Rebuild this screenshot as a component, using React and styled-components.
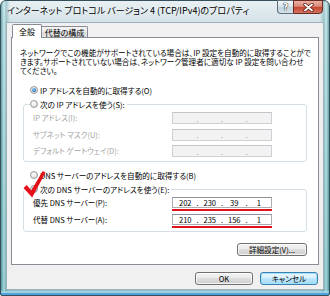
import React from 'react'
import styled, { createGlobalStyle, css } from 'styled-components'

const GlobalStyle = createGlobalStyle`
  html, body {
    margin: 0;
    padding: 0;
    background: #ffffff;
  }
  body {
    width: 330px;
    height: 296px;
    overflow: hidden;
    font-family: "Noto Sans CJK JP", "Noto Sans", sans-serif;
  }
`

const font = `"Noto Sans CJK JP", "Noto Sans", sans-serif`

const Window = styled.div`
  width: 330px;
  height: 296px;
  box-sizing: border-box;
  border: 1px solid #34505c;
  border-radius: 6px 6px 2px 2px;
  display: flex;
  flex-direction: column;
  font-family: ${font};
  font-feature-settings: "palt";
  background:
    linear-gradient(to right, rgba(40,120,125,.6), rgba(190,240,240,.55) 3px, rgba(80,150,160,.45) 5px, rgba(255,255,255,0) 9px,
      rgba(255,255,255,0) calc(100% - 9px), rgba(80,150,160,.45) calc(100% - 5px), rgba(190,240,240,.55) calc(100% - 3px), rgba(40,120,125,.6)),
    linear-gradient(to bottom, #e9f0f3, #d3e2e8 21px, #a7cbd2 60%, #8dbcc4);
  box-shadow: inset 0 -2px 0 rgba(60,150,215,.8), inset 0 -4px 0 rgba(170,220,240,.7);
`

const TitleBar = styled.div`
  height: 21px;
  flex: none;
  display: flex;
  justify-content: space-between;
  align-items: flex-start;
`

const Title = styled.div`
  padding: 3px 0 0 6px;
  font-size: 9px;
  line-height: 13px;
  color: #000;
  white-space: nowrap;
  text-shadow: 0 0 4px rgba(255,255,255,.9);
`

const CaptionButtons = styled.div`
  display: flex;
  margin: -1px 6px 0 0;
`

const CaptionButton = styled.div`
  height: 14px;
  box-sizing: border-box;
  display: flex;
  align-items: center;
  justify-content: center;
  ${p => p.$close ? css`
    width: 30px;
    border: 1px solid #6b2a22;
    border-radius: 0 0 4px 0;
    background: linear-gradient(to bottom, #eab0a4, #d98a78 45%, #c4452f 50%, #d2735f);
  ` : css`
    width: 16px;
    border: 1px solid #5d6f7b;
    border-right: none;
    border-radius: 0 0 0 4px;
    background: linear-gradient(to bottom, #f3f7f9, #dbe6ec 45%, #c3d4dd 50%, #d3e1e8);
  `}
`

const HelpGlyph = styled.span`
  font-family: "DejaVu Sans", sans-serif;
  font-weight: bold;
  font-size: 9px;
  line-height: 9px;
  color: #fff;
  text-shadow: 0 0 1px #2c3e4a, 0 0 1px #2c3e4a, 0 0 1px #2c3e4a;
`

const Client = styled.div`
  flex: 1;
  margin: 0 5px 5px;
  border: 1px solid #9fb2ba;
  background: #f0f0f0;
  padding: 1px 4px 0;
  display: flex;
  flex-direction: column;
`

const Tabs = styled.div`
  display: flex;
  align-items: flex-end;
  margin: 0 0 -1px 1px;
  position: relative;
  z-index: 1;
`

const Tab = styled.div`
  box-sizing: border-box;
  font-size: 8px;
  color: #000;
  display: flex;
  align-items: center;
  justify-content: center;
  border: 1px solid #898c95;
  ${p => p.$active ? css`
    width: 30px;
    height: 14px;
    background: #fff;
    border-bottom: none;
    border-radius: 2px 2px 0 0;
    padding-bottom: 1px;
  ` : css`
    width: 46px;
    height: 11px;
    margin-bottom: 1px;
    border-left: none;
    border-bottom: none;
    border-radius: 0 2px 0 0;
    background: linear-gradient(to bottom, #f4f4f4, #e9e9e9 50%, #dcdcdc 50%, #e4e4e4);
  `}
`

const Panel = styled.div`
  position: relative;
  background: #fff;
  border: 1px solid #898c95;
  padding: 10px 11px 8px 8px;
  display: flex;
  flex-direction: column;
`

const Description = styled.div`
  font-size: 7.6px;
  line-height: 9px;
  color: #000;
  white-space: nowrap;
`

const Line = styled.span`
  display: block;
`

const RadioRow = styled.label`
  display: flex;
  align-items: center;
  gap: 2px;
  height: 12px;
  margin-top: ${p => p.$mt}px;
  padding-left: ${p => p.$pl}px;
  font-size: 7.6px;
  color: #000;
  white-space: nowrap;
`

const RadioDot = styled.span`
  width: 8px;
  height: 8px;
  box-sizing: border-box;
  border-radius: 50%;
  border: 1px solid #9a9a9a;
  background: radial-gradient(circle at 40% 35%, #ffffff, #dcdcdc 75%);
  display: inline-flex;
  align-items: center;
  justify-content: center;
  flex: none;
  ${p => p.$checked && css`
    &::after {
      content: '';
      width: 4px;
      height: 4px;
      border-radius: 50%;
      background: radial-gradient(circle at 40% 35%, #8fd0f8, #1b5fb8 80%);
    }
  `}
`

const Group = styled.fieldset`
  margin: 2px 0 0 3px;
  padding: 0 34px ${p => p.$pb}px 0;
  border: 1px solid #d5dfe5;
  border-radius: 3px;
  min-width: 0;
`

const Legend = styled.legend`
  margin-left: 6px;
  padding: 0 2px 0 0;
`

const Rows = styled.div`
  display: grid;
  grid-template-columns: 1fr 100px;
  row-gap: ${p => p.$gap}px;
  align-items: start;
  margin-top: 2px;
  padding-left: 9px;
`

const FieldLabel = styled.div`
  font-size: 7.5px;
  line-height: ${p => p.$h}px;
  color: ${p => p.$disabled ? '#a3a3a3' : '#000'};
  white-space: nowrap;
`

const FieldCell = styled.div`
  display: flex;
  flex-direction: column;
  gap: 1px;
`

const IPBox = styled.div`
  height: ${p => p.$h}px;
  box-sizing: border-box;
  border: 1px solid ${p => p.$disabled ? '#cdd1d5' : '#abadb3'};
  border-top-color: ${p => p.$disabled ? '#c2c6cb' : '#8e9198'};
  background: ${p => p.$disabled ? '#f2f2f2' : '#fff'};
  display: flex;
  align-items: center;
  padding: 0 2px;
  font-size: 7.6px;
  color: ${p => p.$disabled ? '#a3a3a3' : '#000'};
`

const Octet = styled.span`
  flex: 1;
  text-align: center;
`

const Dot = styled.span`
  width: 4px;
  text-align: center;
`

const Underline = styled.div`
  height: 2px;
  background: #e0141e;
`

const Check = styled.svg`
  position: absolute;
  left: 10px;
  top: 132px;
  z-index: 2;
`

const Button = styled.button`
  width: ${p => p.$w}px;
  height: 13px;
  padding: 0;
  box-sizing: border-box;
  border: 1px solid #707070;
  border-radius: 3px;
  font-family: ${font};
  font-feature-settings: "palt";
  font-size: 7.6px;
  line-height: 11px;
  color: #000;
  background: linear-gradient(to bottom, #f2f2f2 0%, #ebebeb 50%, #dddddd 50%, #cfcfcf 100%);
  box-shadow: inset 0 0 0 1px rgba(255,255,255,.75);
  ${p => p.$default && css`
    border-color: #3c7fb1;
    background: linear-gradient(to bottom, #eaf6fd 0%, #d9f0fc 50%, #bee6fd 50%, #a7d9f5 100%);
    box-shadow: inset 0 0 0 1px #9ee3fb;
  `}
`

const AdvancedRow = styled.div`
  display: flex;
  justify-content: flex-end;
  margin-top: 11px;
`

const Footer = styled.div`
  display: flex;
  justify-content: flex-end;
  gap: 7px;
  margin: 7px 1px 0 0;
`

const Radio = ({ checked, children, mt = 0, pl = 10 }) => (
  <RadioRow $mt={mt} $pl={pl}>
    <RadioDot $checked={checked} />
    {children}
  </RadioRow>
)

const Address = ({ parts, disabled, h }) => (
  <IPBox $disabled={disabled} $h={h}>
    <Octet>{parts[0]}</Octet><Dot>.</Dot>
    <Octet>{parts[1]}</Octet><Dot>.</Dot>
    <Octet>{parts[2]}</Octet><Dot>.</Dot>
    <Octet>{parts[3]}</Octet>
  </IPBox>
)

const ipFields = ['IP アドレス(I):', 'サブネット マスク(U):', 'デフォルト ゲートウェイ(D):']
const dnsFields = [
  { label: '優先 DNS サーバー(P):', parts: ['202', '230', '39', '1'] },
  { label: '代替 DNS サーバー(A):', parts: ['210', '235', '156', '1'] },
]

export default function App() {
  return (
    <>
      <GlobalStyle />
      <Window>
        <TitleBar>
          <Title>インターネット プロトコル バージョン 4 (TCP/IPv4)のプロパティ</Title>
          <CaptionButtons>
            <CaptionButton><HelpGlyph>?</HelpGlyph></CaptionButton>
            <CaptionButton $close>
              <svg width="11" height="9" viewBox="0 0 11 9">
                <path d="M2 1.5 L9 7.5 M9 1.5 L2 7.5" stroke="#5a1c14" strokeWidth="3.4" strokeLinecap="round" />
                <path d="M2 1.5 L9 7.5 M9 1.5 L2 7.5" stroke="#fff" strokeWidth="1.8" strokeLinecap="round" />
              </svg>
            </CaptionButton>
          </CaptionButtons>
        </TitleBar>
        <Client>
          <Tabs>
            <Tab $active>全般</Tab>
            <Tab>代替の構成</Tab>
          </Tabs>
          <Panel>
            <Description>
              <Line>ネットワークでこの機能がサポートされている場合は、IP 設定を自動的に取得することがで</Line>
              <Line>きます。サポートされていない場合は、ネットワーク管理者に適切な IP 設定を問い合わせ</Line>
              <Line>てください。</Line>
            </Description>
            <Radio checked mt={9}>IP アドレスを自動的に取得する(O)</Radio>
            <Group $pb={4}>
              <Legend><Radio pl={0}>次の IP アドレスを使う(S):</Radio></Legend>
              <Rows $gap={4.5}>
                {ipFields.map(label => (
                  <React.Fragment key={label}>
                    <FieldLabel $disabled $h={12}>{label}</FieldLabel>
                    <Address disabled h={12} parts={['', '', '', '']} />
                  </React.Fragment>
                ))}
              </Rows>
            </Group>
            <Radio mt={7}>DNS サーバーのアドレスを自動的に取得する(B)</Radio>
            <Group $pb={3}>
              <Legend><Radio checked pl={0}>次の DNS サーバーのアドレスを使う(E):</Radio></Legend>
              <Rows $gap={3}>
                {dnsFields.map(f => (
                  <React.Fragment key={f.label}>
                    <FieldLabel $h={11}>{f.label}</FieldLabel>
                    <FieldCell>
                      <Address h={11} parts={f.parts} />
                      <Underline />
                    </FieldCell>
                  </React.Fragment>
                ))}
              </Rows>
            </Group>
            <AdvancedRow>
              <Button $w={70}>詳細設定(V)...</Button>
            </AdvancedRow>
            <Check width="24" height="29" viewBox="0 0 24 29">
              <path d="M1.5 18 L4.8 15 L9.2 20.5 L20.8 1 L23.5 2.6 L10.2 27.5 Z" fill="#e3101a" />
            </Check>
          </Panel>
          <Footer>
            <Button $w={58}>OK</Button>
            <Button $w={58} $default>キャンセル</Button>
          </Footer>
        </Client>
      </Window>
    </>
  )
}
